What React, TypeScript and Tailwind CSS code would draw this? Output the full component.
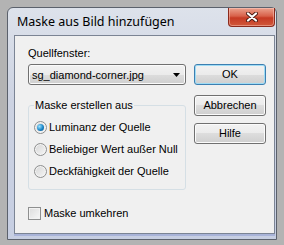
import React from "react";

const BTN =
  "flex items-center justify-center h-[21px] w-full rounded-[3px] border text-[11px] text-black bg-[linear-gradient(#f2f2f2,#ebebeb_50%,#dddddd_50%,#cfcfcf)]";

function Radio({ checked, label }: { checked?: boolean; label: string }) {
  return (
    <label className="flex items-center h-[22px] gap-[2px]">
      <span className="flex items-center justify-center w-[13px] h-[13px] rounded-full border border-[#8e8f8f] bg-[linear-gradient(135deg,#d6d6d6,#f6f6f6)] shadow-[inset_0_0_0_1px_#f4f4f4]">
        {checked && (
          <span className="w-[7px] h-[7px] rounded-full bg-[radial-gradient(circle_at_35%_35%,#9ee3ff,#1a86c8_55%,#0b4a7e)]" />
        )}
      </span>
      <span className="whitespace-nowrap text-[11px] leading-[16px] text-black">{label}</span>
    </label>
  );
}

export default function App() {
  return (
    <div className="w-[284px] h-[245px] overflow-hidden bg-[#b3b3b3] pt-[7px] pl-[7px] font-['Liberation_Sans',sans-serif]">
      <div className="w-[270px] h-[233px] flex flex-col rounded-t-[6px] border border-[#5b616c] bg-[linear-gradient(#dde2eb,#cdd3e2_40%,#c6cee2)]">
        {/* title bar */}
        <div className="flex items-start h-[27px] shrink-0">
          <span className="self-center pl-[9px] pt-[1px] text-[12.5px] text-black font-['Noto_Sans',sans-serif]">
            Maske aus Bild hinzufügen
          </span>
          <div className="ml-auto mr-[1px] flex items-center justify-center w-[47px] h-[19px] rounded-b-[4px] border border-t-0 border-[#8b2a1c] bg-[linear-gradient(#eba28e,#d8614a_45%,#c63a24_55%,#d0583a)] shadow-[inset_0_0_0_1px_rgba(255,210,200,0.45)]">
            <svg width="12" height="10" viewBox="0 0 12 10">
              <path d="M2 1.5 L10 8.5 M10 1.5 L2 8.5" stroke="#4a1a12" strokeWidth="4" strokeLinecap="round" />
              <path d="M2 1.5 L10 8.5 M10 1.5 L2 8.5" stroke="#ffffff" strokeWidth="2.2" strokeLinecap="round" />
            </svg>
          </div>
        </div>

        {/* client area */}
        <div className="ml-[6px] mr-[1px] h-[199px] shrink-0 border border-[#7b8494] bg-[#f0f0f0] flex pl-[13px]">
          <div className="w-[158px] flex flex-col">
            <div className="mt-[9px] h-[16px] text-[11px] leading-[16px] text-black">Quellfenster:</div>
            <div className="mt-[3px] h-[21px] flex items-center rounded-[3px] border border-[#707070] bg-[linear-gradient(#f2f2f2,#ebebeb_50%,#dddddd_50%,#cfcfcf)] shadow-[inset_0_0_0_1px_#fbfbfb] pl-[3px] pr-[5px]">
              <span className="flex-1 text-[11px] leading-[16px] text-black">sg_diamond-corner.jpg</span>
              <svg width="7" height="4" viewBox="0 0 7 4">
                <path d="M0 0 H7 L3.5 4 Z" fill="#000" />
              </svg>
            </div>
            <fieldset className="mt-[12px] h-[93px] rounded-[3px] border border-[#d5dfe5] pl-[5px] pt-[3px]">
              <legend className="px-[1px] text-[11px] leading-[16px] text-black">Maske erstellen aus</legend>
              <Radio checked label="Luminanz der Quelle" />
              <Radio label="Beliebiger Wert außer Null" />
              <Radio label="Deckfähigkeit der Quelle" />
            </fieldset>
            <label className="mt-[15px] flex items-center h-[16px] gap-[3px]">
              <span className="w-[13px] h-[13px] border border-[#8e8f8f] bg-[linear-gradient(135deg,#dcdcdc,#f7f7f7)] shadow-[inset_0_0_0_1px_#f2f2f2]" />
              <span className="text-[11px] leading-[16px] text-black">Maske umkehren</span>
            </label>
          </div>

          <div className="w-[72px] ml-[8px] flex flex-col">
            <button className={BTN + " mt-[28px] border-[#3c7fb1] shadow-[inset_0_0_0_1px_#9fdcf5]"}>OK</button>
            <button className={BTN + " mt-[10px] border-[#707070] shadow-[inset_0_0_0_1px_#fbfbfb]"}>Abbrechen</button>
            <button className={BTN + " mt-[7px] border-[#707070] shadow-[inset_0_0_0_1px_#fbfbfb]"}>Hilfe</button>
          </div>
        </div>
        <div className="ml-[6px] mr-[1px] h-[2px] bg-[#a8b3d8]" />
      </div>
    </div>
  );
}
